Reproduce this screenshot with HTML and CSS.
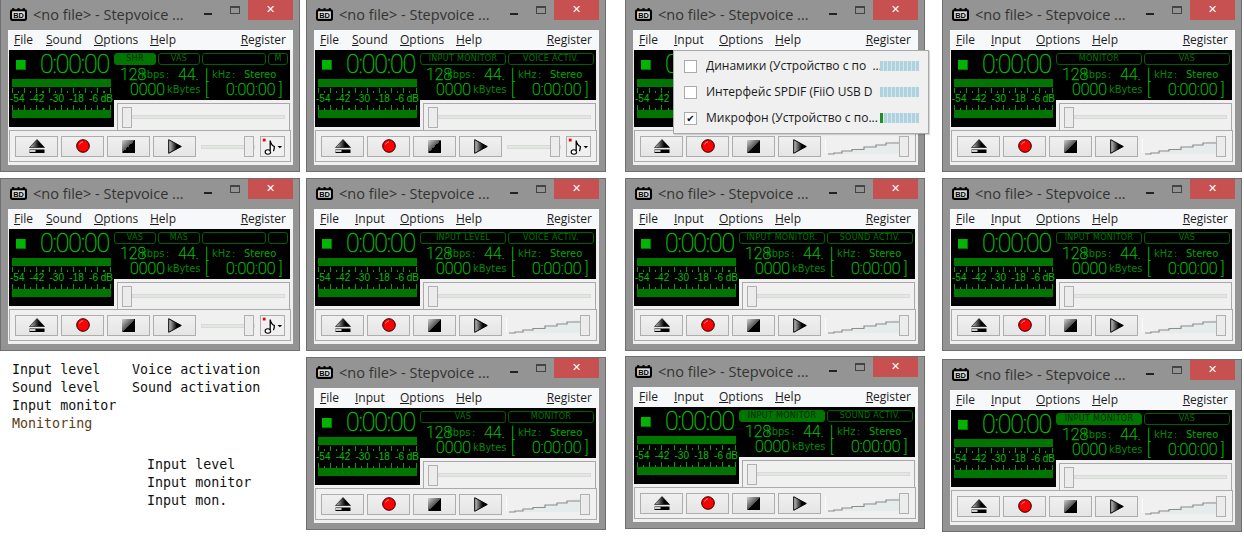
FILE: index.html
```html
<!DOCTYPE html>
<html lang="en">
<head>
    <meta charset="UTF-8">
    <title>Stepvoice skins</title>
    <link rel="stylesheet" href="styles.css">
</head>
<body>
<svg class="defs" width="0" height="0">
    <defs>
        <linearGradient id="shade" x1="0" y1="0" x2="1" y2="0"><stop offset="0" stop-color="#c8c8c8"/><stop offset=".65" stop-color="#000"/></linearGradient>
        <linearGradient id="shade2" x1="0" y1="0" x2="1" y2="1"><stop offset="0" stop-color="#d0d0d0"/><stop offset=".5" stop-color="#555"/><stop offset=".5" stop-color="#000"/></linearGradient>
        <symbol id="i-app" viewBox="0 0 16 12"><rect x="0" y="1" width="16" height="11" rx="2" fill="#000"/><rect x="2" y="0" width="2" height="2" fill="#000"/><rect x="7" y="0" width="2" height="2" fill="#000"/><rect x="12" y="0" width="2" height="2" fill="#000"/><rect x="2" y="3" width="12" height="7" fill="#ddd"/><text x="8" y="9" text-anchor="middle" font-size="7" font-weight="700" font-family="Liberation Sans, sans-serif" fill="#000">BD</text></symbol>
        <symbol id="i-eject" viewBox="0 0 16 15"><path d="M8 .5 15.5 8.500H.5Z" fill="url(#shade)" stroke="#000" stroke-width=".6"/><rect x=".5" y="10.500" width="15" height="3.500" fill="#000"/><rect x=".5" y="11" width="6" height="2" fill="#ccc"/></symbol>
        <symbol id="i-record" viewBox="0 0 14 14"><circle cx="7" cy="7" r="6.300" fill="#f00" stroke="#200" stroke-width="1"/><path d="M3.500 5.500Q4.500 3 7 2.800" stroke="#ff9090" fill="none"/></symbol>
        <symbol id="i-stop" viewBox="0 0 13 13"><rect width="13" height="13" fill="url(#shade2)"/></symbol>
        <symbol id="i-play" viewBox="0 0 14 15"><path d="M.7.7 13.300 7.500.7 14.300Z" fill="url(#shade)" stroke="#000"/></symbol>
        <symbol id="i-note" viewBox="0 0 25 21"><rect x="2" y="2" width="3" height="3" fill="#e00"/><ellipse cx="7.500" cy="16.500" rx="3" ry="2.400" fill="#fff" stroke="#000" stroke-width="1.200"/><path d="M10 16V4q1 5 4.500 6.500 0 3-1 5" fill="#fff" stroke="#000" stroke-width="1.400"/><path d="M18 10h5l-2.500 2.500Z" fill="#000"/></symbol>
        <symbol id="i-wedge" viewBox="0 0 78 20"><rect x="0" y="3" width="1" height="14" fill="#fbfbfb"/><path d="M3 18 76 4V18Z" fill="#e6ebeb"/><path d="M3 18h6v-1h8v-2h10v-1.500h12V11h12V9h10V7h15V5" fill="none" stroke="#8d8d8d" stroke-width="1.200"/></symbol>
    </defs>
</svg>

<main class="desktop">

<section class="win w1">
    <header class="titlebar"><svg class="app-icon"><use href="#i-app"/></svg><span class="title">&lt;no file&gt; - Stepvoice ...</span><i class="btn-min"></i><i class="btn-max"></i><i class="btn-close">✕</i></header>
    <div class="client">
        <nav class="menu"><span><u>F</u>ile</span><span><u>S</u>ound</span><span><u>O</u>ptions</span><span><u>H</u>elp</span><span class="reg"><u>R</u>egister</span></nav>
        <div class="deck">
            <div class="lcd-left"><div class="clock"><b class="led"></b><span class="time">0:00:00</span></div><div class="bar"></div><div class="ticks"></div><div class="scale"><span>-54</span><span>-42</span><span>-30</span><span>-18</span><span>-6 dB</span></div><div class="ticks"></div><div class="bar"></div></div>
            <div class="lcd-right"><div class="modes four"><span class="mode on">SHR</span><span class="mode">VAS</span><span class="mode"></span><span class="mode">M</span></div><div class="line1"><span class="big">128</span><span class="dim">kbps</span><span class="dim">:</span><span class="big">44.</span><span class="big">|</span><span class="dim">kHz</span><span class="dim">:</span><span class="lbl">Stereo</span></div><div class="line2"><span class="big">0000</span><span class="dim">kBytes</span><span class="big">[</span><span class="big">0:00:00</span><span class="big">]</span></div></div>
            <div class="seek"><b class="thumb"></b><i class="track"></i></div>
        </div>
        <div class="controls"><button class="tbtn"><svg class="ic-eject"><use href="#i-eject"/></svg></button><button class="tbtn"><svg class="ic-rec"><use href="#i-record"/></svg></button><button class="tbtn"><svg class="ic-stop"><use href="#i-stop"/></svg></button><button class="tbtn"><svg class="ic-play"><use href="#i-play"/></svg></button><div class="vol flat"><i class="track"></i><b class="thumb"></b></div><button class="note"><svg class="ic-note"><use href="#i-note"/></svg></button></div>
    </div>
</section>

<section class="win w2">
    <header class="titlebar"><svg class="app-icon"><use href="#i-app"/></svg><span class="title">&lt;no file&gt; - Stepvoice ...</span><i class="btn-min"></i><i class="btn-max"></i><i class="btn-close">✕</i></header>
    <div class="client">
        <nav class="menu"><span><u>F</u>ile</span><span><u>S</u>ound</span><span><u>O</u>ptions</span><span><u>H</u>elp</span><span class="reg"><u>R</u>egister</span></nav>
        <div class="deck">
            <div class="lcd-left"><div class="clock"><b class="led"></b><span class="time">0:00:00</span></div><div class="bar"></div><div class="ticks"></div><div class="scale"><span>-54</span><span>-42</span><span>-30</span><span>-18</span><span>-6 dB</span></div><div class="ticks"></div><div class="bar"></div></div>
            <div class="lcd-right"><div class="modes"><span class="mode">INPUT MONITOR</span><span class="mode">VOICE ACTIV.</span></div><div class="line1"><span class="big">128</span><span class="dim">kbps</span><span class="dim">:</span><span class="big">44.</span><span class="big">|</span><span class="dim">kHz</span><span class="dim">:</span><span class="lbl">Stereo</span></div><div class="line2"><span class="big">0000</span><span class="dim">kBytes</span><span class="big">[</span><span class="big">0:00:00</span><span class="big">]</span></div></div>
            <div class="seek"><b class="thumb"></b><i class="track"></i></div>
        </div>
        <div class="controls"><button class="tbtn"><svg class="ic-eject"><use href="#i-eject"/></svg></button><button class="tbtn"><svg class="ic-rec"><use href="#i-record"/></svg></button><button class="tbtn"><svg class="ic-stop"><use href="#i-stop"/></svg></button><button class="tbtn"><svg class="ic-play"><use href="#i-play"/></svg></button><div class="vol flat"><i class="track"></i><b class="thumb"></b></div><button class="note"><svg class="ic-note"><use href="#i-note"/></svg></button></div>
    </div>
</section>

<section class="win w3">
    <header class="titlebar"><svg class="app-icon"><use href="#i-app"/></svg><span class="title">&lt;no file&gt; - Stepvoice ...</span><i class="btn-min"></i><i class="btn-max"></i><i class="btn-close">✕</i></header>
    <div class="client">
        <nav class="menu"><span><u>F</u>ile</span><span class="input"><u>I</u>nput</span><span><u>O</u>ptions</span><span><u>H</u>elp</span><span class="reg"><u>R</u>egister</span></nav>
        <div class="deck">
            <div class="lcd-left"><div class="clock"><b class="led"></b><span class="time">0:00:00</span></div><div class="bar"></div><div class="ticks"></div><div class="scale"><span>-54</span><span>-42</span><span>-30</span><span>-18</span><span>-6 dB</span></div><div class="ticks"></div><div class="bar"></div></div>
            <div class="lcd-right"></div>
            <div class="seek"></div>
        </div>
        <div class="controls"><button class="tbtn"><svg class="ic-eject"><use href="#i-eject"/></svg></button><button class="tbtn"><svg class="ic-rec"><use href="#i-record"/></svg></button><button class="tbtn"><svg class="ic-stop"><use href="#i-stop"/></svg></button><button class="tbtn"><svg class="ic-play"><use href="#i-play"/></svg></button><div class="vol"><svg class="wedge"><use href="#i-wedge"/></svg><b class="thumb"></b></div></div>
    </div>
    <div class="popup">
        <label class="pop-row"><b class="check"></b><span class="pop-text">Динамики (Устройство с по &nbsp;...</span><i class="level"></i></label>
        <label class="pop-row"><b class="check"></b><span class="pop-text">Интерфейс SPDIF (FiiO USB D</span><i class="level"></i></label>
        <label class="pop-row"><b class="check checked">✔</b><span class="pop-text">Микрофон (Устройство с по...</span><i class="level live"></i></label>
    </div>
</section>

<section class="win w4">
    <header class="titlebar"><svg class="app-icon"><use href="#i-app"/></svg><span class="title">&lt;no file&gt; - Stepvoice ...</span><i class="btn-min"></i><i class="btn-max"></i><i class="btn-close">✕</i></header>
    <div class="client">
        <nav class="menu"><span><u>F</u>ile</span><span class="input"><u>I</u>nput</span><span><u>O</u>ptions</span><span><u>H</u>elp</span><span class="reg"><u>R</u>egister</span></nav>
        <div class="deck">
            <div class="lcd-left"><div class="clock"><b class="led"></b><span class="time">0:00:00</span></div><div class="bar"></div><div class="ticks"></div><div class="scale"><span>-54</span><span>-42</span><span>-30</span><span>-18</span><span>-6 dB</span></div><div class="ticks"></div><div class="bar"></div></div>
            <div class="lcd-right"><div class="modes"><span class="mode">MONITOR</span><span class="mode">VAS</span></div><div class="line1"><span class="big">128</span><span class="dim">kbps</span><span class="dim">:</span><span class="big">44.</span><span class="big">|</span><span class="dim">kHz</span><span class="dim">:</span><span class="lbl">Stereo</span></div><div class="line2"><span class="big">0000</span><span class="dim">kBytes</span><span class="big">[</span><span class="big">0:00:00</span><span class="big">]</span></div></div>
            <div class="seek"><b class="thumb"></b><i class="track"></i></div>
        </div>
        <div class="controls"><button class="tbtn"><svg class="ic-eject"><use href="#i-eject"/></svg></button><button class="tbtn"><svg class="ic-rec"><use href="#i-record"/></svg></button><button class="tbtn"><svg class="ic-stop"><use href="#i-stop"/></svg></button><button class="tbtn"><svg class="ic-play"><use href="#i-play"/></svg></button><div class="vol"><svg class="wedge"><use href="#i-wedge"/></svg><b class="thumb"></b></div></div>
    </div>
</section>

<section class="win w5">
    <header class="titlebar"><svg class="app-icon"><use href="#i-app"/></svg><span class="title">&lt;no file&gt; - Stepvoice ...</span><i class="btn-min"></i><i class="btn-max"></i><i class="btn-close">✕</i></header>
    <div class="client">
        <nav class="menu"><span><u>F</u>ile</span><span><u>S</u>ound</span><span><u>O</u>ptions</span><span><u>H</u>elp</span><span class="reg"><u>R</u>egister</span></nav>
        <div class="deck">
            <div class="lcd-left"><div class="clock"><b class="led"></b><span class="time">0:00:00</span></div><div class="bar"></div><div class="ticks"></div><div class="scale"><span>-54</span><span>-42</span><span>-30</span><span>-18</span><span>-6 dB</span></div><div class="ticks"></div><div class="bar"></div></div>
            <div class="lcd-right"><div class="modes four"><span class="mode">VAS</span><span class="mode">MAS</span><span class="mode"></span><span class="mode"></span></div><div class="line1"><span class="big">128</span><span class="dim">kbps</span><span class="dim">:</span><span class="big">44.</span><span class="big">|</span><span class="dim">kHz</span><span class="dim">:</span><span class="lbl">Stereo</span></div><div class="line2"><span class="big">0000</span><span class="dim">kBytes</span><span class="big">[</span><span class="big">0:00:00</span><span class="big">]</span></div></div>
            <div class="seek"><b class="thumb"></b><i class="track"></i></div>
        </div>
        <div class="controls"><button class="tbtn"><svg class="ic-eject"><use href="#i-eject"/></svg></button><button class="tbtn"><svg class="ic-rec"><use href="#i-record"/></svg></button><button class="tbtn"><svg class="ic-stop"><use href="#i-stop"/></svg></button><button class="tbtn"><svg class="ic-play"><use href="#i-play"/></svg></button><div class="vol flat"><i class="track"></i><b class="thumb"></b></div><button class="note"><svg class="ic-note"><use href="#i-note"/></svg></button></div>
    </div>
</section>

<section class="win w6">
    <header class="titlebar"><svg class="app-icon"><use href="#i-app"/></svg><span class="title">&lt;no file&gt; - Stepvoice ...</span><i class="btn-min"></i><i class="btn-max"></i><i class="btn-close">✕</i></header>
    <div class="client">
        <nav class="menu"><span><u>F</u>ile</span><span class="input"><u>I</u>nput</span><span><u>O</u>ptions</span><span><u>H</u>elp</span><span class="reg"><u>R</u>egister</span></nav>
        <div class="deck">
            <div class="lcd-left"><div class="clock"><b class="led"></b><span class="time">0:00:00</span></div><div class="bar"></div><div class="ticks"></div><div class="scale"><span>-54</span><span>-42</span><span>-30</span><span>-18</span><span>-6 dB</span></div><div class="ticks"></div><div class="bar"></div></div>
            <div class="lcd-right"><div class="modes"><span class="mode">INPUT LEVEL</span><span class="mode">VOICE ACTIV.</span></div><div class="line1"><span class="big">128</span><span class="dim">kbps</span><span class="dim">:</span><span class="big">44.</span><span class="big">|</span><span class="dim">kHz</span><span class="dim">:</span><span class="lbl">Stereo</span></div><div class="line2"><span class="big">0000</span><span class="dim">kBytes</span><span class="big">[</span><span class="big">0:00:00</span><span class="big">]</span></div></div>
            <div class="seek"><b class="thumb"></b><i class="track"></i></div>
        </div>
        <div class="controls"><button class="tbtn"><svg class="ic-eject"><use href="#i-eject"/></svg></button><button class="tbtn"><svg class="ic-rec"><use href="#i-record"/></svg></button><button class="tbtn"><svg class="ic-stop"><use href="#i-stop"/></svg></button><button class="tbtn"><svg class="ic-play"><use href="#i-play"/></svg></button><div class="vol"><svg class="wedge"><use href="#i-wedge"/></svg><b class="thumb"></b></div></div>
    </div>
</section>

<section class="win w7">
    <header class="titlebar"><svg class="app-icon"><use href="#i-app"/></svg><span class="title">&lt;no file&gt; - Stepvoice ...</span><i class="btn-min"></i><i class="btn-max"></i><i class="btn-close">✕</i></header>
    <div class="client">
        <nav class="menu"><span><u>F</u>ile</span><span class="input"><u>I</u>nput</span><span><u>O</u>ptions</span><span><u>H</u>elp</span><span class="reg"><u>R</u>egister</span></nav>
        <div class="deck">
            <div class="lcd-left"><div class="clock"><b class="led"></b><span class="time">0:00:00</span></div><div class="bar"></div><div class="ticks"></div><div class="scale"><span>-54</span><span>-42</span><span>-30</span><span>-18</span><span>-6 dB</span></div><div class="ticks"></div><div class="bar"></div></div>
            <div class="lcd-right"><div class="modes"><span class="mode">INPUT MONITOR.</span><span class="mode">SOUND ACTIV.</span></div><div class="line1"><span class="big">128</span><span class="dim">kbps</span><span class="dim">:</span><span class="big">44.</span><span class="big">|</span><span class="dim">kHz</span><span class="dim">:</span><span class="lbl">Stereo</span></div><div class="line2"><span class="big">0000</span><span class="dim">kBytes</span><span class="big">[</span><span class="big">0:00:00</span><span class="big">]</span></div></div>
            <div class="seek"><b class="thumb"></b><i class="track"></i></div>
        </div>
        <div class="controls"><button class="tbtn"><svg class="ic-eject"><use href="#i-eject"/></svg></button><button class="tbtn"><svg class="ic-rec"><use href="#i-record"/></svg></button><button class="tbtn"><svg class="ic-stop"><use href="#i-stop"/></svg></button><button class="tbtn"><svg class="ic-play"><use href="#i-play"/></svg></button><div class="vol"><svg class="wedge"><use href="#i-wedge"/></svg><b class="thumb"></b></div></div>
    </div>
</section>

<section class="win w8">
    <header class="titlebar"><svg class="app-icon"><use href="#i-app"/></svg><span class="title">&lt;no file&gt; - Stepvoice ...</span><i class="btn-min"></i><i class="btn-max"></i><i class="btn-close">✕</i></header>
    <div class="client">
        <nav class="menu"><span><u>F</u>ile</span><span class="input"><u>I</u>nput</span><span><u>O</u>ptions</span><span><u>H</u>elp</span><span class="reg"><u>R</u>egister</span></nav>
        <div class="deck">
            <div class="lcd-left"><div class="clock"><b class="led"></b><span class="time">0:00:00</span></div><div class="bar"></div><div class="ticks"></div><div class="scale"><span>-54</span><span>-42</span><span>-30</span><span>-18</span><span>-6 dB</span></div><div class="ticks"></div><div class="bar"></div></div>
            <div class="lcd-right"><div class="modes"><span class="mode">INPUT MONITOR</span><span class="mode">VAS</span></div><div class="line1"><span class="big">128</span><span class="dim">kbps</span><span class="dim">:</span><span class="big">44.</span><span class="big">|</span><span class="dim">kHz</span><span class="dim">:</span><span class="lbl">Stereo</span></div><div class="line2"><span class="big">0000</span><span class="dim">kBytes</span><span class="big">[</span><span class="big">0:00:00</span><span class="big">]</span></div></div>
            <div class="seek"><b class="thumb"></b><i class="track"></i></div>
        </div>
        <div class="controls"><button class="tbtn"><svg class="ic-eject"><use href="#i-eject"/></svg></button><button class="tbtn"><svg class="ic-rec"><use href="#i-record"/></svg></button><button class="tbtn"><svg class="ic-stop"><use href="#i-stop"/></svg></button><button class="tbtn"><svg class="ic-play"><use href="#i-play"/></svg></button><div class="vol"><svg class="wedge"><use href="#i-wedge"/></svg><b class="thumb"></b></div></div>
    </div>
</section>

<section class="win w9">
    <header class="titlebar"><svg class="app-icon"><use href="#i-app"/></svg><span class="title">&lt;no file&gt; - Stepvoice ...</span><i class="btn-min"></i><i class="btn-max"></i><i class="btn-close">✕</i></header>
    <div class="client">
        <nav class="menu"><span><u>F</u>ile</span><span class="input"><u>I</u>nput</span><span><u>O</u>ptions</span><span><u>H</u>elp</span><span class="reg"><u>R</u>egister</span></nav>
        <div class="deck">
            <div class="lcd-left"><div class="clock"><b class="led"></b><span class="time">0:00:00</span></div><div class="bar"></div><div class="ticks"></div><div class="scale"><span>-54</span><span>-42</span><span>-30</span><span>-18</span><span>-6 dB</span></div><div class="ticks"></div><div class="bar"></div></div>
            <div class="lcd-right"><div class="modes"><span class="mode">VAS</span><span class="mode">MONITOR</span></div><div class="line1"><span class="big">128</span><span class="dim">kbps</span><span class="dim">:</span><span class="big">44.</span><span class="big">|</span><span class="dim">kHz</span><span class="dim">:</span><span class="lbl">Stereo</span></div><div class="line2"><span class="big">0000</span><span class="dim">kBytes</span><span class="big">[</span><span class="big">0:00:00</span><span class="big">]</span></div></div>
            <div class="seek"><b class="thumb"></b><i class="track"></i></div>
        </div>
        <div class="controls"><button class="tbtn"><svg class="ic-eject"><use href="#i-eject"/></svg></button><button class="tbtn"><svg class="ic-rec"><use href="#i-record"/></svg></button><button class="tbtn"><svg class="ic-stop"><use href="#i-stop"/></svg></button><button class="tbtn"><svg class="ic-play"><use href="#i-play"/></svg></button><div class="vol"><svg class="wedge"><use href="#i-wedge"/></svg><b class="thumb"></b></div></div>
    </div>
</section>

<section class="win w10">
    <header class="titlebar"><svg class="app-icon"><use href="#i-app"/></svg><span class="title">&lt;no file&gt; - Stepvoice ...</span><i class="btn-min"></i><i class="btn-max"></i><i class="btn-close">✕</i></header>
    <div class="client">
        <nav class="menu"><span><u>F</u>ile</span><span class="input"><u>I</u>nput</span><span><u>O</u>ptions</span><span><u>H</u>elp</span><span class="reg"><u>R</u>egister</span></nav>
        <div class="deck">
            <div class="lcd-left"><div class="clock"><b class="led"></b><span class="time">0:00:00</span></div><div class="bar"></div><div class="ticks"></div><div class="scale"><span>-54</span><span>-42</span><span>-30</span><span>-18</span><span>-6 dB</span></div><div class="ticks"></div><div class="bar"></div></div>
            <div class="lcd-right"><div class="modes"><span class="mode on">INPUT MONITOR</span><span class="mode">SOUND ACTIV.</span></div><div class="line1"><span class="big">128</span><span class="dim">kbps</span><span class="dim">:</span><span class="big">44.</span><span class="big">|</span><span class="dim">kHz</span><span class="dim">:</span><span class="lbl">Stereo</span></div><div class="line2"><span class="big">0000</span><span class="dim">kBytes</span><span class="big">[</span><span class="big">0:00:00</span><span class="big">]</span></div></div>
            <div class="seek"><b class="thumb"></b><i class="track"></i></div>
        </div>
        <div class="controls"><button class="tbtn"><svg class="ic-eject"><use href="#i-eject"/></svg></button><button class="tbtn"><svg class="ic-rec"><use href="#i-record"/></svg></button><button class="tbtn"><svg class="ic-stop"><use href="#i-stop"/></svg></button><button class="tbtn"><svg class="ic-play"><use href="#i-play"/></svg></button><div class="vol"><svg class="wedge"><use href="#i-wedge"/></svg><b class="thumb"></b></div></div>
    </div>
</section>

<section class="win w11">
    <header class="titlebar"><svg class="app-icon"><use href="#i-app"/></svg><span class="title">&lt;no file&gt; - Stepvoice ...</span><i class="btn-min"></i><i class="btn-max"></i><i class="btn-close">✕</i></header>
    <div class="client">
        <nav class="menu"><span><u>F</u>ile</span><span class="input"><u>I</u>nput</span><span><u>O</u>ptions</span><span><u>H</u>elp</span><span class="reg"><u>R</u>egister</span></nav>
        <div class="deck">
            <div class="lcd-left"><div class="clock"><b class="led"></b><span class="time">0:00:00</span></div><div class="bar"></div><div class="ticks"></div><div class="scale"><span>-54</span><span>-42</span><span>-30</span><span>-18</span><span>-6 dB</span></div><div class="ticks"></div><div class="bar"></div></div>
            <div class="lcd-right"><div class="modes"><span class="mode on">INPUT MONITOR</span><span class="mode">VAS</span></div><div class="line1"><span class="big">128</span><span class="dim">kbps</span><span class="dim">:</span><span class="big">44.</span><span class="big">|</span><span class="dim">kHz</span><span class="dim">:</span><span class="lbl">Stereo</span></div><div class="line2"><span class="big">0000</span><span class="dim">kBytes</span><span class="big">[</span><span class="big">0:00:00</span><span class="big">]</span></div></div>
            <div class="seek"><b class="thumb"></b><i class="track"></i></div>
        </div>
        <div class="controls"><button class="tbtn"><svg class="ic-eject"><use href="#i-eject"/></svg></button><button class="tbtn"><svg class="ic-rec"><use href="#i-record"/></svg></button><button class="tbtn"><svg class="ic-stop"><use href="#i-stop"/></svg></button><button class="tbtn"><svg class="ic-play"><use href="#i-play"/></svg></button><div class="vol"><svg class="wedge"><use href="#i-wedge"/></svg><b class="thumb"></b></div></div>
    </div>
</section>

<pre class="note-text n1">Input level
Sound level
Input monitor
<span class="brown">Monitoring</span></pre>
<pre class="note-text n2">Voice activation
Sound activation</pre>
<pre class="note-text n3">Input level
Input monitor
Input mon.</pre>

</main>
</body>
</html>
```

FILE: styles.css
```css
html, body {
    margin: 0;
    background: #fff;
}
.defs {
    position: absolute;
}
.desktop {
    position: relative;
    width: 1244px;
    height: 540px;
    overflow: hidden;
}

/* windows sit on a free canvas */
.win {
    position: absolute;
    box-sizing: border-box;
    width: 300px;
    height: 173px;
    padding: 30px 6px 0 7px;
    border: 1px solid #6f6f6f;
    background: #949494;
}
.w1 { left: 0; top: -1px; }
.w2 { left: 306px; top: -1px; }
.w3 { left: 625px; top: -1px; }
.w4 { left: 942px; top: -1px; }
.w5 { left: 0; top: 178px; }
.w6 { left: 306px; top: 178px; }
.w7 { left: 625px; top: 178px; }
.w8 { left: 942px; top: 178px; }
.w9 { left: 306px; top: 357px; }
.w10 { left: 625px; top: 356px; }
.w11 { left: 942px; top: 359px; }

.titlebar {
    position: absolute;
    left: 0;
    top: 0;
    right: 0;
    height: 30px;
}
.app-icon {
    position: absolute;
    left: 9px;
    top: 8px;
    width: 17px;
    height: 13px;
}
.title {
    position: absolute;
    left: 32px;
    top: 5px;
    font: 14.5px/20px "Open Sans", sans-serif;
    color: #333;
    white-space: nowrap;
}
.btn-min {
    position: absolute;
    left: 203px;
    top: 13px;
    width: 8px;
    height: 2px;
    background: #222;
}
.btn-max {
    position: absolute;
    left: 229px;
    top: 6px;
    width: 8px;
    height: 5px;
    border: 1px solid #444;
    border-top-width: 2px;
}
.btn-close {
    position: absolute;
    left: 247px;
    top: 0;
    width: 45px;
    height: 20px;
    background: #c75050;
    color: #fff;
    font: 700 11px/20px "DejaVu Sans", sans-serif;
    text-align: center;
}

.client {
    box-sizing: border-box;
    width: 285px;
    height: 135px;
    padding-left: 1px;
    background: #f0f0f0;
}
.menu {
    display: grid;
    grid-template-columns: 32px 48px 56px 1fr auto;
    height: 20px;
    padding: 0 7px 0 6px;
    margin-left: -1px;
    background: #f7f8f9;
    font: 12px/20px "Open Sans", sans-serif;
    color: #1c1c1c;
}
.menu .input {
    margin-left: 3px;
}

.deck {
    display: grid;
    grid-template-columns: 105px 176px;
    grid-template-rows: 50px 30px;
    height: 80px;
}
.lcd-left {
    grid-row: 1 / 3;
    box-sizing: border-box;
    height: 77px;
    padding: 0 3px;
    background: #000;
}
.lcd-right {
    background: #000;
}
.clock {
    display: flex;
    justify-content: space-between;
    align-items: center;
    height: 29px;
    padding: 0 0 0 4px;
}
.led {
    width: 9px;
    height: 9px;
    background: #00b400;
    border-right: 1px solid #007800;
    border-bottom: 1px solid #007800;
}
.time {
    font: 100 25px/25px Roboto, sans-serif;
    color: #00d000;
    letter-spacing: -1.2px;
    margin-right: 2px;
    -webkit-text-stroke: .3px #00c000;
}
.bar {
    height: 8px;
    background: #007500;
}
.ticks {
    height: 5px;
    margin-top: 1px;
    background:
        repeating-linear-gradient(90deg, #00a000 0 1px, transparent 1px 12.2px) 0 0 / 100% 5px no-repeat,
        repeating-linear-gradient(90deg, #00a000 0 1px, transparent 1px 6.1px) 0 3px / 100% 2px no-repeat;
}
.scale {
    display: flex;
    justify-content: space-between;
    height: 11px;
    margin: 0 -2px;
    font: 10px/11px "Liberation Sans", sans-serif;
    color: #00c000;
}

.modes {
    display: grid;
    grid-template-columns: 86px 86px;
    gap: 2px;
    padding: 3px 2px 0 0;
    height: 12px;
}
.modes.four {
    grid-template-columns: 42px 42px 64px 20px;
}
.mode {
    box-sizing: border-box;
    height: 12px;
    border: 1px solid #005f00;
    border-radius: 3px;
    font: 8px/10px "DejaVu Sans", sans-serif;
    letter-spacing: .3px;
    color: #007a00;
    text-align: center;
    white-space: nowrap;
    overflow: hidden;
}
.mode.on {
    background: #007500;
    border-color: #007500;
    color: #002a00;
}
.line1, .line2 {
    display: grid;
    align-items: center;
    height: 15px;
    font: 11px/15px "DejaVu Sans Condensed", "DejaVu Sans", sans-serif;
    color: #00a000;
}
.line1 {
    grid-template-columns: 21px 25px 12px 27px 7px 20px 12px auto;
    padding: 2px 0 0 6px;
}
.line2 {
    grid-template-columns: 37px 38px 21px 53px auto;
    padding-left: 16px;
}
.big {
    font: 100 16px/15px Roboto, sans-serif;
    color: #00d000;
    -webkit-text-stroke: .3px #00c000;
}
.dim {
    color: #008a00;
}
.lbl {
    color: #00a800;
}

.seek {
    display: flex;
    align-items: center;
    box-sizing: border-box;
    height: 27px;
    margin: 3px 0 0 3px;
    padding: 0 4px 0 4px;
    border: 1px solid #a8a8a8;
    border-bottom: 0;
    background: #f0f0f0;
}
.track {
    display: block;
    flex: 1;
    box-sizing: border-box;
    height: 4px;
    background: #e3e6e3;
    border: 1px solid #d6dbd6;
}
.thumb {
    box-sizing: border-box;
    width: 10px;
    height: 21px;
    border: 1px solid #b0b0b0;
    background: #ececec;
}

.controls {
    display: flex;
    align-items: center;
    box-sizing: border-box;
    width: 282px;
    height: 32px;
    margin-top: 0;
    padding: 0 5px;
    gap: 3px;
    border: 1px solid #aaa;
    background: #f0f0f0;
}
.tbtn, .note {
    display: flex;
    align-items: center;
    justify-content: center;
    box-sizing: border-box;
    width: 43px;
    height: 21px;
    padding: 0;
    border: 1px solid #adadad;
    background: linear-gradient(#f0f0f0, #e5e5e5);
}
.ic-eject { width: 16px; height: 15px; }
.ic-rec { width: 14px; height: 14px; }
.ic-stop { width: 13px; height: 13px; }
.ic-play { width: 14px; height: 15px; }
.note {
    width: 25px;
    margin-left: 2px;
    background: #f0f0f0;
}
.ic-note { width: 25px; height: 21px; }

.vol {
    position: relative;
    display: flex;
    align-items: center;
    justify-content: flex-end;
    flex: 1;
    height: 21px;
}
.vol.flat {
    flex: none;
    width: 54px;
    margin-left: 2px;
}
.vol.flat .track {
    position: absolute;
    left: 0;
    right: 0;
    top: 9px;
    flex: none;
}
.vol .thumb {
    position: relative;
    margin-right: 1px;
}
.wedge {
    position: absolute;
    left: 1px;
    top: 0;
    width: 78px;
    height: 20px;
}

/* input device dropdown lies over the window */
.popup {
    position: absolute;
    left: 47px;
    top: 50px;
    box-sizing: border-box;
    width: 256px;
    height: 84px;
    padding: 2px 0;
    background: #f0f0f0;
    border: 1px solid #a9a9a9;
    box-shadow: 1px 1px 1px rgba(0, 0, 0, .15);
}
.pop-row {
    display: flex;
    align-items: center;
    height: 26px;
    padding-left: 10px;
    font: 12px/26px "Open Sans", sans-serif;
    color: #1a1a1a;
}
.check {
    box-sizing: border-box;
    width: 13px;
    height: 13px;
    margin-right: 9px;
    background: #fff;
    border: 1px solid #aaa;
    font: 10px/11px "DejaVu Sans", sans-serif;
    color: #111;
    text-align: center;
}
.pop-text {
    width: 174px;
    white-space: nowrap;
    overflow: hidden;
}
.level {
    width: 39px;
    height: 10px;
    background: repeating-linear-gradient(90deg, #aed3df 0 3px, #d5e6ec 3px 4px);
}
.level.live {
    background:
        linear-gradient(#1f8f1f, #1f8f1f) 0 0 / 3px 100% no-repeat,
        repeating-linear-gradient(90deg, #aed3df 0 3px, #d5e6ec 3px 4px);
}

.note-text {
    position: absolute;
    margin: 0;
    font: 13.33px/18px "DejaVu Sans Mono", monospace;
    color: #111;
}
.n1 { left: 12px; top: 361px; }
.n2 { left: 132px; top: 361px; }
.n3 { left: 147px; top: 456px; }
.brown { color: #5c3b12; }
```
